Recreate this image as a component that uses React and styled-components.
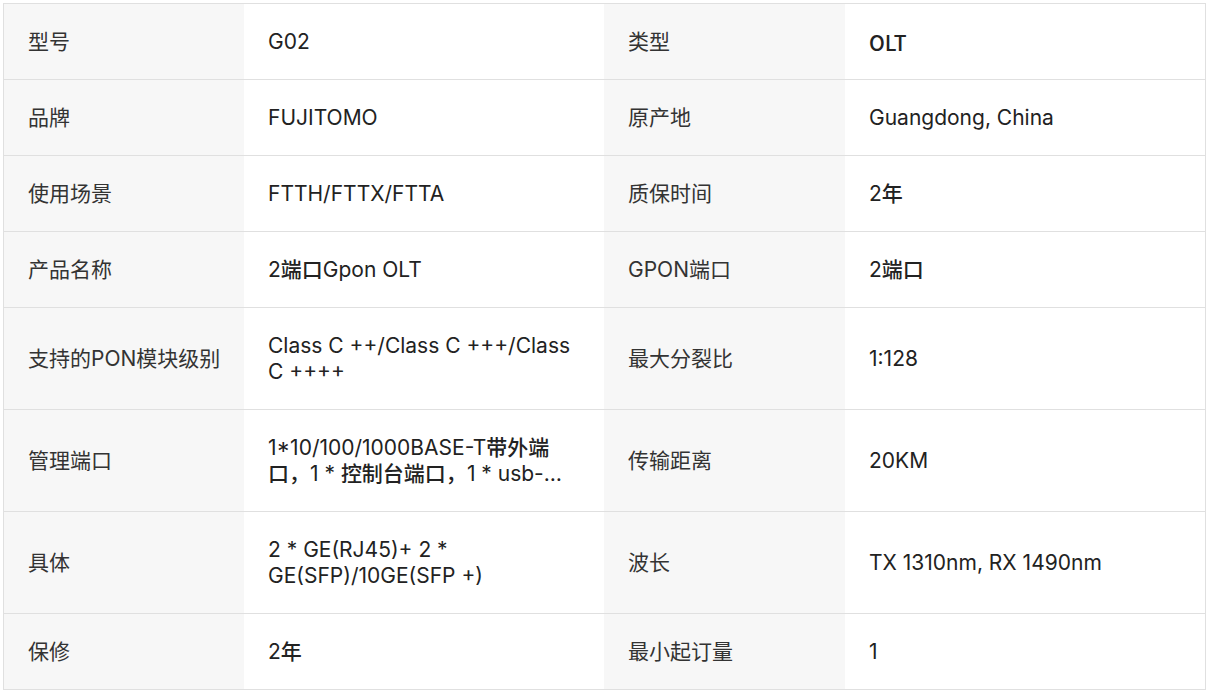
import React from "react";
import styled, { createGlobalStyle } from "styled-components";

const GlobalStyle = createGlobalStyle`
  html, body { margin: 0; padding: 0; background: #ffffff; }
  body {
    padding: 3px;
    font-family: Inter, "Noto Sans CJK SC", sans-serif;
  }
`;

const Table = styled.div`
  width: 1203px;
  box-sizing: border-box;
  border: 1px solid #e0e0e0;
  display: flex;
  flex-direction: column;
`;

const Row = styled.div`
  display: grid;
  grid-template-columns: 240px 360px 241px 360px;
  border-top: ${(p) => (p.$first ? "none" : "1px solid #e0e0e0")};
`;

const Cell = styled.div`
  box-sizing: border-box;
  padding: 25px 24px 24px 24px;
  font-size: 21px;
  line-height: 26px;
  display: flex;
  align-items: center;
`;

const Label = styled(Cell)`
  background: #f7f7f7;
  color: #333333;
  font-weight: 400;
  padding-right: 12px;
  white-space: nowrap;
`;

const Value = styled(Cell)`
  background: #ffffff;
  color: #222222;
  font-weight: 400;
  font-family: ${(p) =>
    p.$cjk ? `"Noto Sans CJK SC", sans-serif` : `Inter, "Noto Sans CJK SC", sans-serif`};
`;

const CjkMedium = styled.span`
  font-weight: 500;
`;

const Clamp = styled.span`
  display: -webkit-box;
  -webkit-box-orient: vertical;
  -webkit-line-clamp: 2;
  overflow: hidden;
`;

const rows = [
  [["型号"], ["G02"], ["类型"], ["OLT", { cjk: true, strong: true }]],
  [["品牌"], ["FUJITOMO"], ["原产地"], ["Guangdong, China"]],
  [["使用场景"], ["FTTH/FTTX/FTTA"], ["质保时间"], ["2年", { strong: true }]],
  [["产品名称"], ["2端口Gpon OLT", { strong: true }], ["GPON端口"], ["2端口", { strong: true }]],
  [["支持的PON模块级别"], ["Class C ++/Class C +++/Class C ++++"], ["最大分裂比"], ["1:128"]],
  [
    ["管理端口"],
    ["1*10/100/1000BASE-T带外端口，1 * 控制台端口，1 * usb-console端口", { strong: true, clamp: true }],
    ["传输距离"],
    ["20KM"],
  ],
  [["具体"], ["2 * GE(RJ45)+ 2 * GE(SFP)/10GE(SFP +)"], ["波长"], ["TX 1310nm, RX 1490nm"]],
  [["保修"], ["2年", { strong: true }], ["最小起订量"], ["1"]],
];

const CJK_RE = /([\u3000-\u303f\u4e00-\u9fff\uff00-\uffef]+)/;

function renderText(text, strong) {
  if (!strong) return text;
  return text.split(CJK_RE).map((part, i) =>
    i % 2 === 1 ? <CjkMedium key={i}>{part}</CjkMedium> : part
  );
}

function ValueCell({ text, opts = {} }) {
  const content = opts.cjk ? <CjkMedium>{text}</CjkMedium> : renderText(text, opts.strong);
  return (
    <Value $cjk={opts.cjk}>
      {opts.clamp ? <Clamp>{content}</Clamp> : <span>{content}</span>}
    </Value>
  );
}

export default function App() {
  return (
    <>
      <GlobalStyle />
      <Table>
        {rows.map((r, i) => (
          <Row key={i} $first={i === 0}>
            <Label>{r[0][0]}</Label>
            <ValueCell text={r[1][0]} opts={r[1][1]} />
            <Label>{r[2][0]}</Label>
            <ValueCell text={r[3][0]} opts={r[3][1]} />
          </Row>
        ))}
      </Table>
    </>
  );
}
